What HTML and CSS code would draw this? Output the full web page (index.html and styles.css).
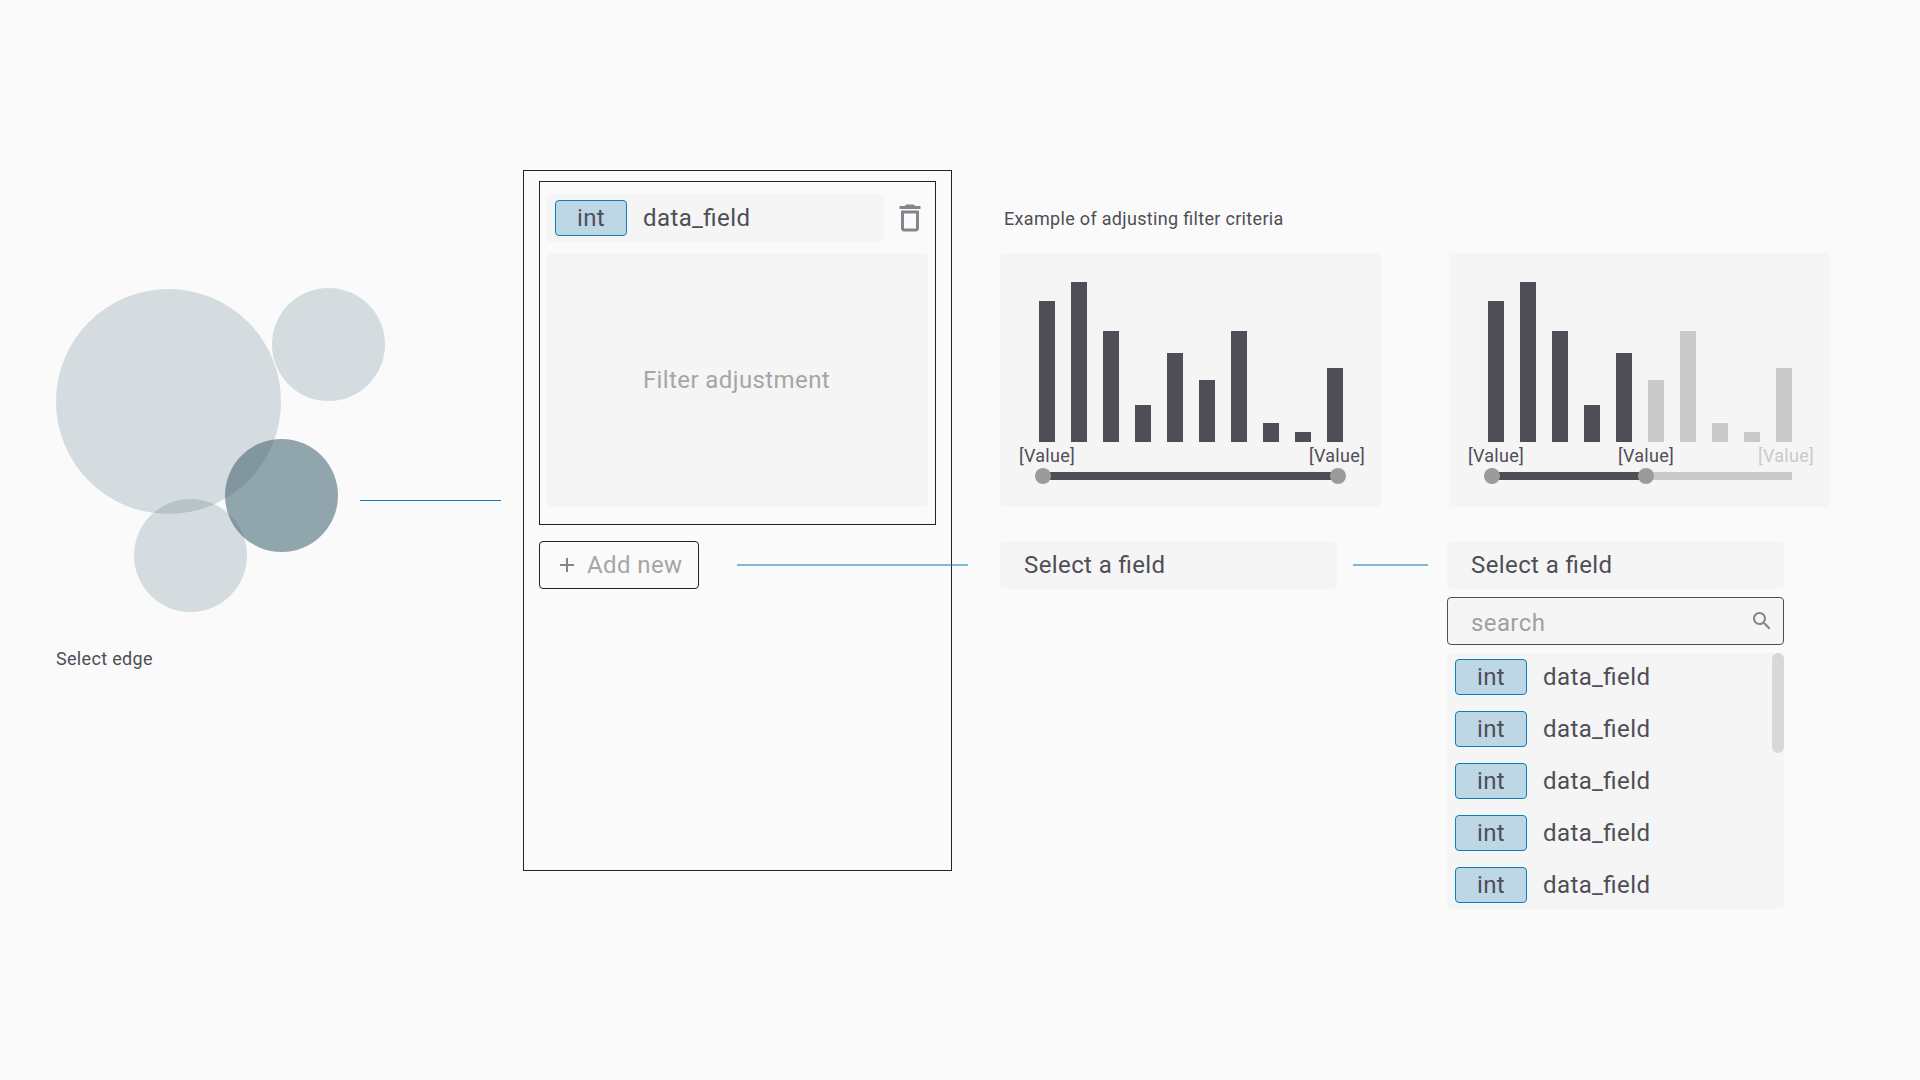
FILE: index.html
```
<!DOCTYPE html>
<html lang="en">
<head>
    <meta charset="UTF-8">
    <meta name="viewport" content="width=device-width, initial-scale=1.0">
    <title>Edge filter flow</title>
    <link rel="stylesheet" href="styles.css">
</head>
<body>
    <main class="flow">
        <section class="edge-step">
            <svg class="bubbles" width="329" height="324" viewBox="0 0 329 324">
                <circle class="bubble" cx="112.5" cy="113.5" r="112.5"/>
                <circle class="bubble" cx="272.5" cy="56.5" r="56.5"/>
                <circle class="bubble" cx="134.5" cy="267.5" r="56.5"/>
                <circle class="bubble selected" cx="225.5" cy="207.5" r="56.5"/>
            </svg>
            <p class="caption">Select edge</p>
            <div class="connector to-panel"></div>
        </section>

        <section class="panel">
            <div class="filter">
                <div class="filter-head">
                    <div class="field">
                        <span class="badge">int</span>
                        <span class="field-name">data_field</span>
                    </div>
                    <svg class="trash" width="36" height="36" viewBox="0 0 24 24">
                        <path d="M6 19c0 1.1.9 2 2 2h8c1.1 0 2-.9 2-2V7H6v12zM8 9h8v10H8V9zm7.5-5l-1-1h-5l-1 1H5v2h14V4z"/>
                    </svg>
                </div>
                <div class="filter-body">Filter adjustment</div>
            </div>
            <button class="add-new">
                <svg width="24" height="24" viewBox="0 0 24 24">
                    <path d="M19 13h-6v6h-2v-6H5v-2h6V5h2v6h6v2z"/>
                </svg>
                <span>Add new</span>
            </button>
            <div class="connector soft to-picker"></div>
        </section>

        <section class="examples">
            <p class="caption">Example of adjusting filter criteria</p>
            <div class="charts">
                <div class="chart">
                    <div class="bars">
                        <div class="bar" style="height: 141px"></div>
                        <div class="bar" style="height: 160px"></div>
                        <div class="bar" style="height: 111px"></div>
                        <div class="bar" style="height: 37px"></div>
                        <div class="bar" style="height: 89px"></div>
                        <div class="bar" style="height: 62px"></div>
                        <div class="bar" style="height: 111px"></div>
                        <div class="bar" style="height: 19px"></div>
                        <div class="bar" style="height: 10px"></div>
                        <div class="bar" style="height: 74px"></div>
                    </div>
                    <div class="values">
                        <span>[Value]</span>
                        <span class="last">[Value]</span>
                    </div>
                    <div class="slider">
                        <div class="thumb"></div>
                        <div class="range"></div>
                        <div class="thumb"></div>
                    </div>
                </div>
                <div class="chart">
                    <div class="bars">
                        <div class="bar" style="height: 141px"></div>
                        <div class="bar" style="height: 160px"></div>
                        <div class="bar" style="height: 111px"></div>
                        <div class="bar" style="height: 37px"></div>
                        <div class="bar" style="height: 89px"></div>
                        <div class="bar off" style="height: 62px"></div>
                        <div class="bar off" style="height: 111px"></div>
                        <div class="bar off" style="height: 19px"></div>
                        <div class="bar off" style="height: 10px"></div>
                        <div class="bar off" style="height: 74px"></div>
                    </div>
                    <div class="values">
                        <span>[Value]</span>
                        <span class="middle">[Value]</span>
                        <span class="last off">[Value]</span>
                    </div>
                    <div class="slider partial">
                        <div class="thumb"></div>
                        <div class="range"></div>
                        <div class="thumb"></div>
                        <div class="rest"></div>
                    </div>
                </div>
            </div>

            <div class="pickers">
                <div class="select">Select a field</div>
                <div class="connector soft between"></div>
                <div class="picker">
                    <div class="select">Select a field</div>
                    <div class="search">
                        <span>search</span>
                        <svg width="24" height="24" viewBox="0 0 24 24">
                            <path d="M15.5 14h-.79l-.28-.27C15.41 12.59 16 11.11 16 9.5 16 5.91 13.09 3 9.5 3S3 5.91 3 9.5 5.91 16 9.5 16c1.61 0 3.09-.59 4.23-1.57l.27.28v.79l5 4.99L20.49 19l-4.99-5zm-6 0C7.01 14 5 11.99 5 9.5S7.01 5 9.5 5 14 7.01 14 9.5 11.99 14 9.5 14z"/>
                        </svg>
                    </div>
                    <div class="options">
                        <div class="option"><span class="badge">int</span><span class="field-name">data_field</span></div>
                        <div class="option"><span class="badge">int</span><span class="field-name">data_field</span></div>
                        <div class="option"><span class="badge">int</span><span class="field-name">data_field</span></div>
                        <div class="option"><span class="badge">int</span><span class="field-name">data_field</span></div>
                        <div class="option"><span class="badge">int</span><span class="field-name">data_field</span></div>
                        <div class="scrollbar"></div>
                    </div>
                </div>
            </div>
        </section>
    </main>
</body>
</html>
```
FILE: styles.css
```
* {
    box-sizing: border-box;
}

body {
    margin: 0;
    background-color: #fafafa;
    color: #4f4d56;
    font-family: Roboto, sans-serif;
    font-size: 24px;
    line-height: 28px;
    letter-spacing: 0.4px;
    font-feature-settings: "liga" 1;
}

.flow {
    display: flex;
    align-items: flex-start;
    height: 1080px;
    padding-left: 56px;
}

.caption {
    margin: 0;
    font-size: 18px;
    line-height: 22px;
    letter-spacing: 0.32px;
}

.connector {
    height: 1px;
    background-color: #0a7fba;
}

.connector.soft {
    height: 2px;
    background-color: rgba(4, 120, 182, 0.5);
}

/* Edge selection */
.edge-step {
    position: relative;
    width: 467px;
    padding-top: 288px;
}

.bubbles {
    display: block;
    margin-bottom: 36px;
}

.bubble {
    fill: rgba(55, 92, 108, 0.19);
}

.bubble.selected {
    fill: rgba(55, 92, 108, 0.54);
}

.to-panel {
    position: absolute;
    left: 304px;
    top: 500px;
    width: 141px;
}

/* Filter panel */
.panel {
    position: relative;
    width: 429px;
    height: 701px;
    margin-top: 170px;
    padding: 10px 15px;
    border: 1px solid #232130;
}

.filter {
    height: 344px;
    padding: 12px 7px;
    border: 1px solid #232130;
}

.filter-head {
    display: flex;
    align-items: center;
    gap: 8px;
    margin-bottom: 11px;
}

.field,
.option {
    display: flex;
    align-items: center;
    gap: 16px;
    padding-left: 8px;
}

.field {
    width: 337px;
    height: 48px;
    border-radius: 4px;
    background-color: #f5f5f5;
}

.badge {
    width: 72px;
    height: 36px;
    border: 1px solid #0a7fba;
    border-radius: 4px;
    background-color: #bed7e4;
    line-height: 34px;
    text-align: center;
}

.trash {
    fill: #82868c;
}

.filter-body {
    display: flex;
    align-items: center;
    justify-content: center;
    height: 254px;
    padding-right: 2px;
    border-radius: 4px;
    background-color: #f5f5f5;
    color: #a5a5a8;
}

.add-new {
    display: flex;
    align-items: center;
    gap: 8px;
    width: 160px;
    height: 48px;
    margin-top: 16px;
    padding: 0 15px;
    border: 1px solid #232130;
    border-radius: 4px;
    background: none;
    color: #a5a5a8;
    font: inherit;
    letter-spacing: inherit;
    white-space: nowrap;
}

.add-new svg {
    flex: none;
    fill: #82868c;
}

.to-picker {
    position: absolute;
    left: 213px;
    top: 393px;
    width: 231px;
}

/* Example charts */
.examples {
    margin-left: 48px;
    padding-top: 208px;
}

.examples > .caption {
    padding-left: 4px;
}

.charts {
    display: flex;
    gap: 68px;
    margin-top: 23px;
}

.chart {
    width: 381px;
    height: 254px;
    padding: 29px 35px 0;
    border-radius: 4px;
    background-color: #f5f5f5;
}

.bars {
    display: flex;
    align-items: flex-end;
    gap: 16px;
    height: 160px;
    padding-left: 4px;
}

.bar {
    width: 16px;
    background-color: #4f4d56;
}

.bar.off,
.rest {
    background-color: #cacaca;
}

.values {
    display: grid;
    grid-template-columns: 150px 140px 60px;
    height: 26px;
    margin: 0 -18px 0 -16px;
    font-size: 18px;
    line-height: 28px;
    letter-spacing: 0.25px;
}

.values .last {
    grid-column: 3;
}

.values .off {
    color: #cacaca;
}

.slider {
    display: flex;
    align-items: center;
    width: 311px;
}

.slider.partial {
    width: 308px;
}

.thumb {
    width: 16px;
    height: 16px;
    border-radius: 50%;
    background-color: #9b9b9b;
    z-index: 1;
}

.range,
.rest {
    flex: 1;
    height: 8px;
    margin: 0 -2px;
}

.range {
    background-color: #4f4d56;
}

.partial .range {
    flex: 0 0 142px;
}

.rest {
    margin-right: 0;
}

/* Field pickers */
.pickers {
    display: flex;
    align-items: flex-start;
    margin-top: 34px;
}

.select,
.search {
    width: 337px;
    height: 48px;
    padding: 0 24px;
    border-radius: 4px;
    background-color: #f5f5f5;
    line-height: 48px;
}

.between {
    width: 75px;
    margin: 23px 19px 0 16px;
}

.picker {
    display: flex;
    flex-direction: column;
    gap: 8px;
}

.search {
    display: flex;
    align-items: center;
    justify-content: space-between;
    padding: 4px 9px 0 23px;
    border: 1px solid #4f4d56;
    color: #a0a0a0;
}

.search svg {
    margin-top: -4px;
    fill: #82868c;
}

.options {
    position: relative;
    display: flex;
    flex-direction: column;
    gap: 16px;
    height: 256px;
    padding-top: 6px;
    border-radius: 4px;
    background-color: #f5f5f5;
}

.scrollbar {
    position: absolute;
    top: 0;
    right: 0;
    width: 12px;
    height: 100px;
    border-radius: 6px;
    background-color: #d8d8d8;
}
```
